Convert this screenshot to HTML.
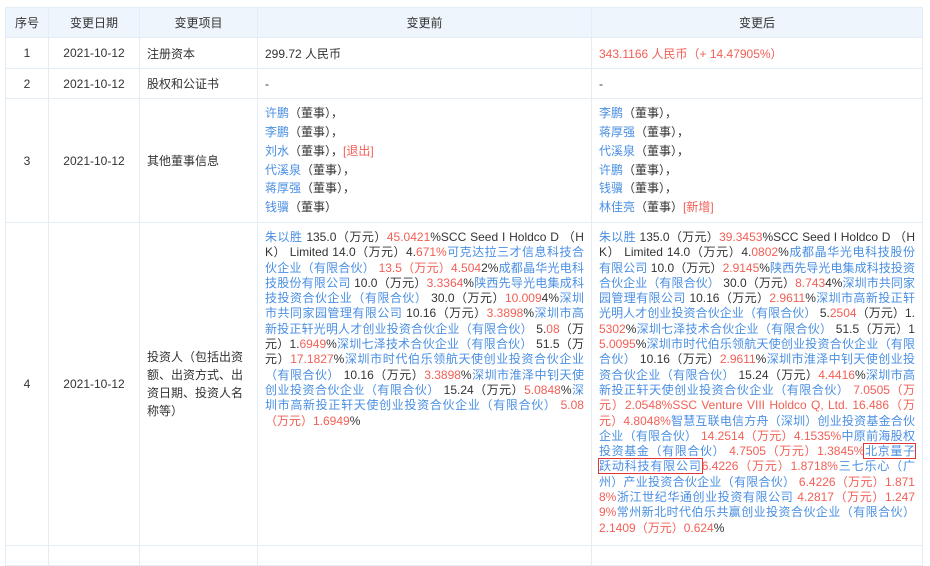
<!DOCTYPE html>
<html><head><meta charset="utf-8"><style>
body{margin:0;background:#fff;font-family:"Liberation Sans","Noto Sans CJK SC",sans-serif;font-size:12px;color:#333;width:930px;height:552px;overflow:hidden;position:relative}
table{position:absolute;left:5px;top:7px;border-collapse:collapse;table-layout:fixed;width:917px}
td,th{border:1px solid #e4ecf6;padding:0 7px;vertical-align:middle;text-align:left;font-weight:normal}
th{background:#eef5fc;height:29px;text-align:center;color:#333}
.c{text-align:center}
.b{color:#4a8fe3}.r{color:#f25f55}
.l{line-height:15.3px}
.l div{text-align:justify;text-align-last:justify;white-space:nowrap;overflow:visible}
.l div.e{text-align-last:left}
.box{outline:1.5px solid #e0363a;outline-offset:0}
.n div{line-height:18.8px}
</style></head><body>
<table>
<colgroup><col style="width:43px"><col style="width:91px"><col style="width:118px"><col style="width:334px"><col style="width:331px"></colgroup>
<tr><th>序号</th><th>变更日期</th><th>变更项目</th><th>变更前</th><th>变更后</th></tr>
<tr style="height:31px"><td class="c">1</td><td class="c">2021-10-12</td><td>注册资本</td><td>299.72 人民币</td><td class="r">343.1166 人民币（+ 14.47905%）</td></tr>
<tr style="height:30px"><td class="c">2</td><td class="c">2021-10-12</td><td>股权和公证书</td><td>-</td><td>-</td></tr>
<tr style="height:124px"><td class="c">3</td><td class="c">2021-10-12</td><td>其他董事信息</td>
<td class="n"><div><span class="b">许鹏</span>（董事），</div><div><span class="b">李鹏</span>（董事），</div><div><span class="b">刘水</span>（董事），<span class="r">[退出]</span></div><div><span class="b">代溪泉</span>（董事），</div><div><span class="b">蒋厚强</span>（董事），</div><div><span class="b">钱骥</span>（董事）</div></td>
<td class="n"><div><span class="b">李鹏</span>（董事），</div><div><span class="b">蒋厚强</span>（董事），</div><div><span class="b">代溪泉</span>（董事），</div><div><span class="b">许鹏</span>（董事），</div><div><span class="b">钱骥</span>（董事），</div><div><span class="b">林佳亮</span>（董事）<span class="r">[新增]</span></div></td></tr>
<tr style="height:323px"><td class="c">4</td><td class="c">2021-10-12</td><td style="line-height:18px">投资人（包括出资额、出资方式、出资日期、投资人名称等）</td>
<td class="l" style="vertical-align:top;padding-top:7px;width:320px">
<div><span class="b">朱以胜</span> 135.0（万元）<span class="r">45.0421</span>%SCC Seed I Holdco D （H</div>
<div>K） Limited 14.0（万元）4.<span class="r">671%</span><span class="b">可克达拉三才信息科技合</span></div>
<div><span class="b">伙企业（有限合伙）</span> <span class="r">13.5（万元）4.504</span>2%<span class="b">成都晶华光电科</span></div>
<div><span class="b">技股份有限公司</span> 10.0（万元）<span class="r">3.3364</span>%<span class="b">陕西先导光电集成科</span></div>
<div><span class="b">技投资合伙企业（有限合伙）</span> 30.0（万元）<span class="r">10.009</span>4%<span class="b">深圳</span></div>
<div><span class="b">市共同家园管理有限公司</span> 10.16（万元）<span class="r">3.3898</span>%<span class="b">深圳市高</span></div>
<div><span class="b">新投正轩光明人才创业投资合伙企业（有限合伙）</span> 5.<span class="r">08</span>（万</div>
<div>元）1.<span class="r">6949</span>%<span class="b">深圳七泽技术合伙企业（有限合伙）</span> 51.5（万</div>
<div>元）<span class="r">17.1827</span>%<span class="b">深圳市时代伯乐领航天使创业投资合伙企业</span></div>
<div><span class="b">（有限合伙）</span> 10.16（万元）<span class="r">3.3898</span>%<span class="b">深圳市淮泽中钊天使</span></div>
<div><span class="b">创业投资合伙企业（有限合伙）</span> 15.24（万元）<span class="r">5.0848</span>%<span class="b">深</span></div>
<div><span class="b">圳市高新投正轩天使创业投资合伙企业（有限合伙）</span> <span class="r">5.08</span></div>
<div class="e"><span class="r">（万元）1.6949</span>%</div>
</td>
<td class="l" style="vertical-align:top;padding-top:7px">
<div><span class="b">朱以胜</span> 135.0（万元）<span class="r">39.3453</span>%SCC Seed I Holdco D （H</div>
<div>K） Limited 14.0（万元）4.<span class="r">0802</span>%<span class="b">成都晶华光电科技股份</span></div>
<div><span class="b">有限公司</span> 10.0（万元）<span class="r">2.9145</span>%<span class="b">陕西先导光电集成科技投资</span></div>
<div><span class="b">合伙企业（有限合伙）</span> 30.0（万元）<span class="r">8.743</span>4%<span class="b">深圳市共同家</span></div>
<div><span class="b">园管理有限公司</span> 10.16（万元）<span class="r">2.9611</span>%<span class="b">深圳市高新投正轩</span></div>
<div><span class="b">光明人才创业投资合伙企业（有限合伙）</span> 5.<span class="r">2504</span>（万元）1.</div>
<div><span class="r">5302</span>%<span class="b">深圳七泽技术合伙企业（有限合伙）</span> 51.5（万元）1</div>
<div><span class="r">5.0095</span>%<span class="b">深圳市时代伯乐领航天使创业投资合伙企业（有限</span></div>
<div><span class="b">合伙）</span> 10.16（万元）<span class="r">2.9611</span>%<span class="b">深圳市淮泽中钊天使创业投</span></div>
<div><span class="b">资合伙企业（有限合伙）</span> 15.24（万元）<span class="r">4.4416</span>%<span class="b">深圳市高</span></div>
<div><span class="b">新投正轩天使创业投资合伙企业（有限合伙）</span> <span class="r">7.0505（万</span></div>
<div><span class="r">元）2.0548%SSC Venture VIII Holdco Q, Ltd. 16.486（万</span></div>
<div><span class="r">元）4.8048%</span><span class="b">智慧互联电信方舟（深圳）创业投资基金合伙</span></div>
<div><span class="b">企业（有限合伙）</span> <span class="r">14.2514（万元）4.1535%</span><span class="b">中原前海股权</span></div>
<div><span class="b">投资基金（有限合伙）</span> <span class="r">4.7505（万元）1.3845%</span><span class="b box">北京量子</span></div>
<div><span class="b box">跃动科技有限公司</span><span class="r">6.4226（万元）1.8718%</span><span class="b">三七乐心（广</span></div>
<div><span class="b">州）产业投资合伙企业（有限合伙）</span> <span class="r">6.4226（万元）1.871</span></div>
<div><span class="r">8%</span><span class="b">浙江世纪华通创业投资有限公司</span> <span class="r">4.2817（万元）1.247</span></div>
<div><span class="r">9%</span><span class="b">常州新北时代伯乐共赢创业投资合伙企业（有限合伙）</span></div>
<div class="e"><span class="r">2.1409（万元）0.624</span>%</div>
</td></tr>
<tr style="height:20px"><td></td><td></td><td></td><td></td><td></td></tr>
</table>
</body></html>
